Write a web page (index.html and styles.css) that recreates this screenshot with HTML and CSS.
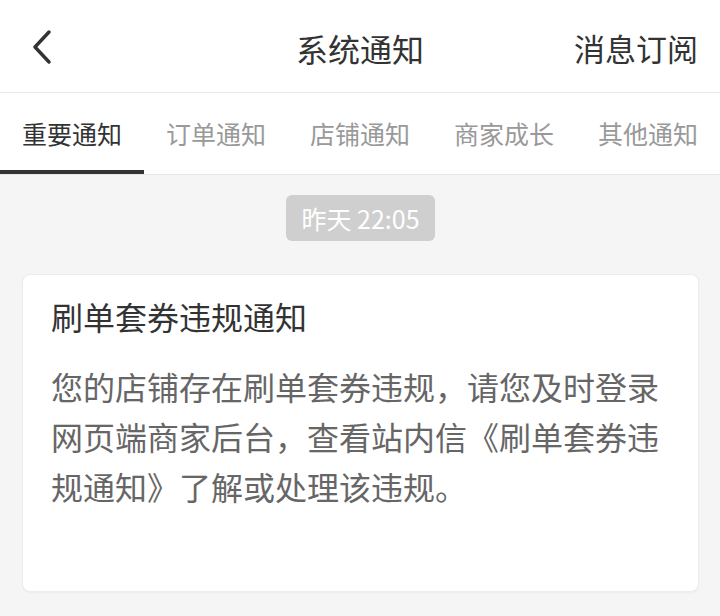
FILE: index.html
```html
<!DOCTYPE html>
<html lang="zh-CN">
<head>
<meta charset="utf-8">
<title>系统通知</title>
<link rel="stylesheet" href="styles.css">
</head>
<body>
<div class="page">
  <header class="topbar">
    <div class="back">
      <svg width="22" height="34" viewBox="0 0 22 34" aria-hidden="true">
        <path d="M18 2 L4 17 L18 32" fill="none" stroke="#333" stroke-width="3.4" stroke-linecap="round" stroke-linejoin="round"/>
      </svg>
    </div>
    <div class="title">系统通知</div>
    <div class="action">消息订阅</div>
  </header>
  <nav class="tabs">
    <div class="tab active">重要通知</div>
    <div class="tab">订单通知</div>
    <div class="tab">店铺通知</div>
    <div class="tab">商家成长</div>
    <div class="tab">其他通知</div>
  </nav>
  <main class="content">
    <div class="time-row"><span class="time">昨天 22:05</span></div>
    <section class="card">
      <h2 class="card-title">刷单套券违规通知</h2>
      <p class="card-body">您的店铺存在刷单套券违规，请您及时登录网页端商家后台，查看站内信《刷单套券违规通知》了解或处理该违规。</p>
    </section>
  </main>
</div>
</body>
</html>
```
FILE: styles.css
```css
* { box-sizing: border-box; }
html, body {
  margin: 0;
  padding: 0;
}
body {
  font-family: "Noto Sans CJK SC", "Noto Sans", sans-serif;
  background: #f5f5f5;
  width: 720px;
  height: 616px;
  overflow: hidden;
}
.page {
  width: 720px;
  height: 616px;
  display: flex;
  flex-direction: column;
}
.topbar {
  height: 93px;
  background: #fff;
  border-bottom: 1px solid #e8e8e8;
  display: flex;
  align-items: center;
  position: relative;
  padding: 0 22px 0 31px;
}
.back {
  width: 22px;
  height: 34px;
  display: flex;
  margin-top: 2px;
}
.title {
  position: absolute;
  left: 0;
  right: 0;
  text-align: center;
  font-size: 32px;
  line-height: 40px;
  color: #333;
  pointer-events: none;
  margin-top: 4px;
}
.action {
  margin-left: auto;
  font-size: 31px;
  line-height: 40px;
  color: #333;
  margin-top: 4px;
}
.tabs {
  height: 82px;
  background: #fff;
  border-bottom: 1px solid #e6e6e6;
  display: flex;
}
.tab {
  flex: 1 1 0;
  display: flex;
  align-items: center;
  justify-content: center;
  font-size: 25px;
  color: #999;
  border-bottom: 4px solid transparent;
  padding-top: 2px;
}
.tab.active {
  color: #333;
  border-bottom-color: #333;
}
.content {
  flex: 1;
  padding: 20px 21px 0 22px;
}
.time-row {
  display: flex;
  justify-content: center;
}
.time {
  background: #cfcfcf;
  color: #fff;
  font-size: 25px;
  line-height: 46px;
  height: 46px;
  padding: 0 15px;
  border-radius: 6px;
}
.card {
  margin-top: 33px;
  background: #fff;
  border-radius: 8px;
  border: 1px solid #ececec;
  box-shadow: 0 1px 2px rgba(0,0,0,0.04);
  padding: 16px 30px 80px 28px;
}
.card-title {
  margin: 0;
  font-weight: normal;
  font-size: 32px;
  line-height: 50px;
  color: #333;
}
.card-body {
  margin: 20px 0 0 0;
  font-size: 32px;
  line-height: 50px;
  color: #666;
}
```
